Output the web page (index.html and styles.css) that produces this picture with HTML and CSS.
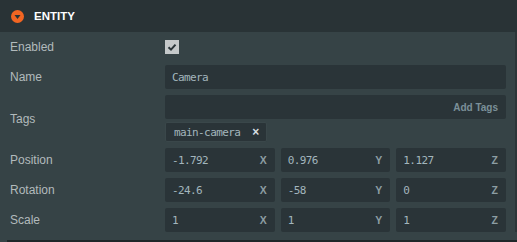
FILE: index.html
```html
<!DOCTYPE html>
<html lang="en">
<head>
  <meta charset="UTF-8">
  <title>Entity Inspector</title>
  <link rel="stylesheet" href="styles.css">
</head>
<body>
  <div class="panel">
    <!-- Header -->
    <div class="panel-header">
      <svg class="fold" width="13" height="13" viewBox="0 0 13 13">
        <circle cx="6.5" cy="6.5" r="6.5" fill="#f26522"/>
        <path d="M3.5 5 L9.5 5 L6.5 9 Z" fill="#2a3336"/>
      </svg>
      <span class="title">ENTITY</span>
    </div>

    <!-- Fields -->
    <div class="panel-body">
      <div class="row">
        <div class="label">Enabled</div>
        <div class="value">
          <div class="checkbox">
            <svg width="14" height="14" viewBox="0 0 14 14">
              <path d="M3.5 7.2 L6 9.6 L10.5 4.6" fill="none" stroke="#2a3438" stroke-width="2"/>
            </svg>
          </div>
        </div>
      </div>

      <div class="row">
        <div class="label">Name</div>
        <div class="value">
          <div class="field"><span class="text">Camera</span></div>
        </div>
      </div>

      <div class="row">
        <div class="label">Tags</div>
        <div class="value">
          <div class="field tags-input"><span class="add-tags">Add Tags</span></div>
          <div class="tag-list">
            <div class="tag">main-camera <span class="tag-remove">&times;</span></div>
          </div>
        </div>
      </div>

      <div class="row">
        <div class="label">Position</div>
        <div class="value vec3">
          <div class="field"><span class="text">-1.792</span><span class="axis">X</span></div>
          <div class="field"><span class="text">0.976</span><span class="axis">Y</span></div>
          <div class="field"><span class="text">1.127</span><span class="axis">Z</span></div>
        </div>
      </div>

      <div class="row">
        <div class="label">Rotation</div>
        <div class="value vec3">
          <div class="field"><span class="text">-24.6</span><span class="axis">X</span></div>
          <div class="field"><span class="text">-58</span><span class="axis">Y</span></div>
          <div class="field"><span class="text">0</span><span class="axis">Z</span></div>
        </div>
      </div>

      <div class="row">
        <div class="label">Scale</div>
        <div class="value vec3">
          <div class="field"><span class="text">1</span><span class="axis">X</span></div>
          <div class="field"><span class="text">1</span><span class="axis">Y</span></div>
          <div class="field"><span class="text">1</span><span class="axis">Z</span></div>
        </div>
      </div>
    </div>
    <div class="panel-foot"></div>
  </div>
</body>
</html>
```

FILE: styles.css
```css
body {
  margin: 0;
  background-color: #364346;
  font-family: "Liberation Sans", Arial, sans-serif;
}
.panel {
  width: 517px;
  height: 242px;
  display: flex;
  flex-direction: column;
}
.panel-header {
  height: 32px;
  background-color: #293336;
  display: flex;
  align-items: center;
  padding-left: 11px;
}
.fold {
  display: block;
}
.title {
  margin-left: 10px;
  color: #ffffff;
  font-weight: bold;
  font-size: 11.5px;
}
.panel-body {
  flex: 1;
  padding: 3px 0 0 0;
  display: flex;
  flex-direction: column;
  gap: 6px;
  border-right: 2px solid #2c3538;
}
.row {
  display: flex;
  align-items: center;
}
.label {
  width: 155px;
  padding-left: 10px;
  color: #b2babc;
  font-size: 12px;
}
.value {
  width: 341px;
  min-height: 24px;
  display: flex;
  flex-direction: column;
  justify-content: center;
}
.checkbox {
  width: 14px;
  height: 14px;
  background-color: #c5c9ca;
}
.checkbox svg {
  display: block;
}
.field {
  height: 24px;
  background-color: #2a3438;
  border-radius: 2px;
  display: flex;
  align-items: center;
  justify-content: space-between;
  padding: 0 8px 0 7px;
  box-sizing: border-box;
}
.text {
  font-family: "DejaVu Sans Mono", monospace;
  font-size: 11px;
  letter-spacing: -0.6px;
  color: #a3b6bd;
}
.tags-input {
  justify-content: flex-end;
}
.add-tags {
  color: #7b9098;
  font-weight: bold;
  font-size: 10px;
}
.tag-list {
  display: flex;
  margin-top: 3px;
}
.tag {
  height: 20px;
  box-sizing: border-box;
  padding: 0 7px 0 8px;
  border: 1px solid #3a474a;
  background-color: #2a3438;
  border-radius: 2px;
  display: flex;
  align-items: center;
  font-family: "DejaVu Sans Mono", monospace;
  font-size: 11px;
  letter-spacing: -0.6px;
  color: #a3b6bd;
}
.tag-remove {
  margin-left: 12px;
  color: #d8dfe1;
  font-family: "Liberation Sans", Arial, sans-serif;
  font-weight: bold;
  font-size: 12px;
  letter-spacing: 0;
}
.vec3 {
  flex-direction: row;
  gap: 6px;
}
.vec3 .field {
  flex: 1;
}
.axis {
  color: #8d9ea3;
  font-weight: bold;
  font-size: 10.5px;
}
.panel-foot {
  height: 2px;
  margin-left: 7px;
  margin-top: 8px;
  background-color: #1f2729;
}
```
